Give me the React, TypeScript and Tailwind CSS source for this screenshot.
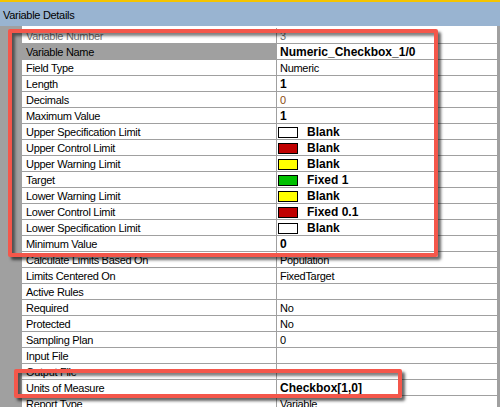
import React from "react";

type Row = {
  label: string;
  value?: string;
  bold?: boolean;
  swatch?: string;
  muted?: boolean;
  selected?: boolean;
  valueClass?: string;
};

const rows: Row[] = [
  { label: "Variable Number", value: "3", muted: true },
  { label: "Variable Name", value: "Numeric_Checkbox_1/0", bold: true, selected: true },
  { label: "Field Type", value: "Numeric" },
  { label: "Length", value: "1", bold: true },
  { label: "Decimals", value: "0", valueClass: "text-[#8b4a12]" },
  { label: "Maximum Value", value: "1", bold: true },
  { label: "Upper Specification Limit", value: "Blank", bold: true, swatch: "#ffffff" },
  { label: "Upper Control Limit", value: "Blank", bold: true, swatch: "#c00000" },
  { label: "Upper Warning Limit", value: "Blank", bold: true, swatch: "#ffff00" },
  { label: "Target", value: "Fixed 1", bold: true, swatch: "#00c000" },
  { label: "Lower Warning Limit", value: "Blank", bold: true, swatch: "#ffff00" },
  { label: "Lower Control Limit", value: "Fixed 0.1", bold: true, swatch: "#c00000" },
  { label: "Lower Specification Limit", value: "Blank", bold: true, swatch: "#ffffff" },
  { label: "Minimum Value", value: "0", bold: true },
  { label: "Calculate Limits Based On", value: "Population" },
  { label: "Limits Centered On", value: "FixedTarget" },
  { label: "Active Rules", value: "" },
  { label: "Required", value: "No" },
  { label: "Protected", value: "No" },
  { label: "Sampling Plan", value: "0" },
  { label: "Input File", value: "" },
  { label: "Output File", value: "" },
  { label: "Units of Measure", value: "Checkbox[1,0]", bold: true },
  { label: "Report Type", value: "Variable" },
];

function GridRow({ row }: { row: Row }) {
  const tone = row.muted ? "text-[#707070]" : "text-black";
  return (
    <div className="flex h-[16px] border-b border-[#a0a0a0]">
      <div
        className={`w-[255px] shrink-0 flex items-center pl-[4px] pt-[1px] border-r border-[#a0a0a0] text-[11px] tracking-[-0.3px] ${tone} ${
          row.selected ? "bg-[#a0a0a0]" : "bg-white"
        }`}
      >
        {row.label}
      </div>
      <div className="flex-1 flex items-center pl-[1px] pt-[1px] bg-white">
        {row.swatch && (
          <span
            className="w-[20px] h-[11px] border border-black shrink-0 mr-[9px]"
            style={{ backgroundColor: row.swatch }}
          />
        )}
        <span
          className={`${row.swatch ? "" : "pl-[2px]"} ${
            row.bold ? "text-[12px] font-bold" : "text-[11px] tracking-[-0.3px]"
          } ${row.valueClass ?? tone}`}
        >
          {row.value}
        </span>
      </div>
    </div>
  );
}

export default function App() {
  return (
    <div
      className="relative w-[500px] h-[407px] overflow-hidden bg-[#a0a0a0] flex flex-col"
      style={{ fontFamily: '"Liberation Sans", Arial, sans-serif' }}
    >
      <div className="h-[26px] shrink-0 border-t-2 border-[#f5c400] bg-[#99b4d1] flex items-center pl-[3px] pt-[2px] text-[11px] tracking-[-0.3px] text-black">
        Variable Details
      </div>

      <div className="flex flex-1 min-h-0">
        <div className="w-[22px] shrink-0" />
        <div className="flex-1 bg-white pt-[2px] overflow-hidden">
          {rows.map((r) => (
            <GridRow key={r.label} row={r} />
          ))}
        </div>
        <div className="w-[3px] shrink-0" />
      </div>

      {/* annotation boxes */}
      <div className="absolute left-[8px] top-[29px] w-[430px] h-[228px] border-4 border-[#f4574b] rounded-[2px] shadow-[3px_3px_3px_rgba(0,0,0,0.6),inset_3px_3px_3px_rgba(0,0,0,0.5)]" />
      <div className="absolute left-[14px] top-[369px] w-[388px] h-[29px] border-4 border-[#f4574b] rounded-[2px] shadow-[3px_3px_3px_rgba(0,0,0,0.6),inset_3px_3px_3px_rgba(0,0,0,0.5)]" />
    </div>
  );
}
